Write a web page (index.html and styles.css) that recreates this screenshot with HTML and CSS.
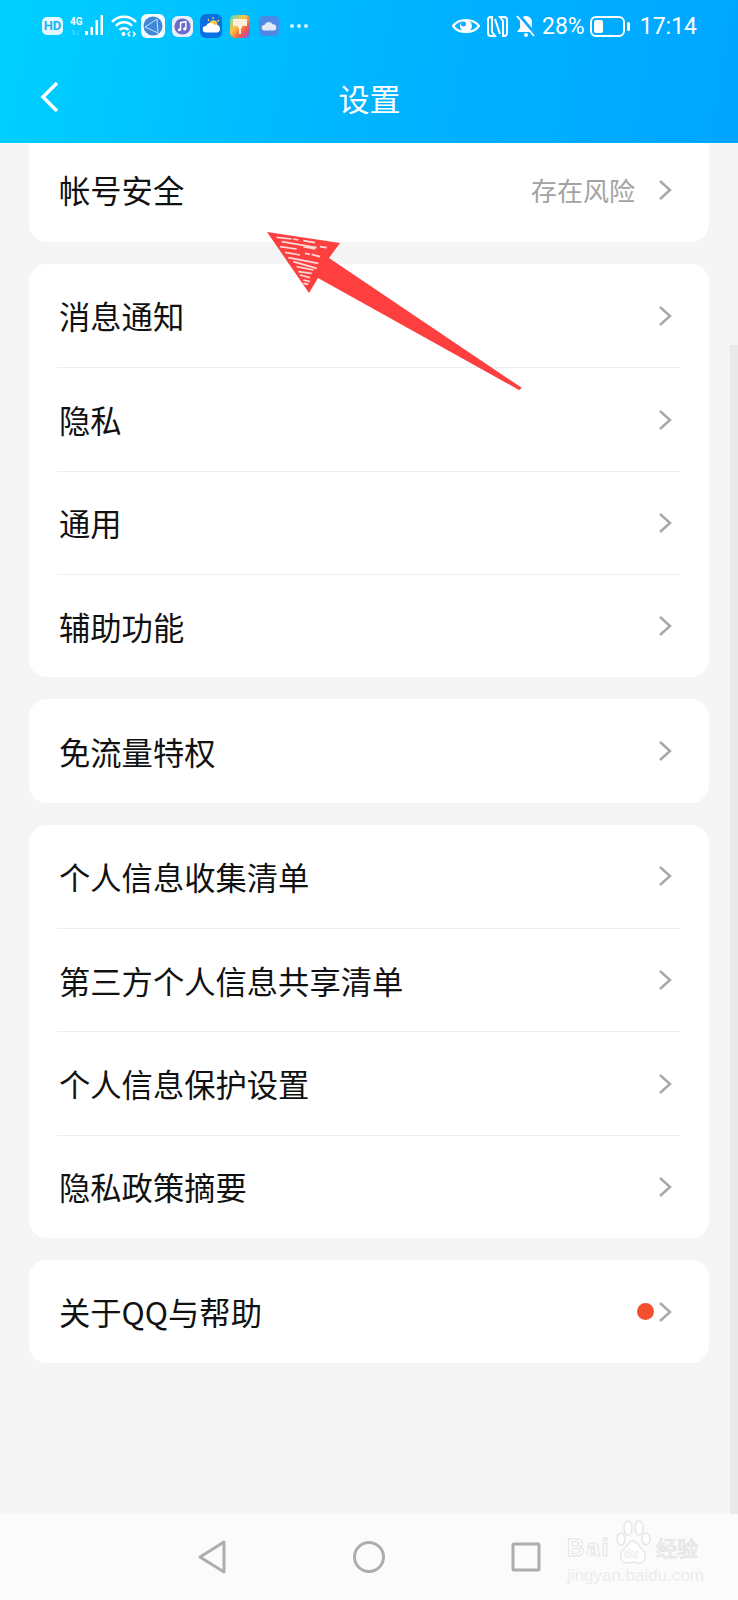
FILE: index.html
```html
<!DOCTYPE html>
<html>
<head>
    <title>设置</title>
    <link rel="stylesheet" href="styles.css">
</head>
<body>
    <div class="phone">
        <div class="header">
            <div class="status-bar">
                <div class="status-left">
                    <span class="hd">HD</span>
                    <svg class="signal" width="33" height="22" viewBox="0 0 33 22">
                        <text x="0" y="10" class="net-text">4G</text>
                        <text x="1" y="20" class="net-small">1↓</text>
                        <rect x="15" y="16" width="3" height="4" fill="#fff"/>
                        <rect x="20.500" y="12" width="2.500" height="8" fill="#fff"/>
                        <rect x="25.500" y="5" width="2.500" height="15" fill="#fff"/>
                        <rect x="30.500" y="0" width="2.500" height="20" fill="#fff"/>
                    </svg>
                    <svg class="wifi" width="26" height="22" viewBox="0 0 26 22" fill="none" stroke="#fff" stroke-width="2.500">
                        <path d="M1 7C7 0 19 0 25 7"/>
                        <path d="M5 11C9 6 17 6 21 11"/>
                        <path d="M8.500 15C10.500 12.500 15.500 12.500 17.500 15"/>
                        <circle cx="12.500" cy="19" r="2" fill="#fff" stroke="none"/>
                        <path d="M19 16.500l-2 2.500 2 2.500M22 16.500l2 2.500-2 2.500" stroke-width="1.500"/>
                    </svg>
                    <svg class="app-first" width="24" height="24" viewBox="0 0 24 24">
                        <rect width="24" height="24" rx="6" fill="#f5fbff"/>
                        <circle cx="12" cy="12" r="9.500" fill="#3f87d8"/>
                        <path d="M4 13L16 5l1 14z" fill="none" stroke="#cfe2f7" stroke-width="1"/>
                    </svg>
                    <svg width="21" height="21" viewBox="0 0 22 22">
                        <rect width="22" height="22" rx="6" fill="#e8eefb"/>
                        <circle cx="11" cy="11" r="8.500" fill="#6a6cc9"/>
                        <path d="M9 14.500V7l5.500-1v7.500" fill="none" stroke="#fff" stroke-width="1.500"/>
                        <circle cx="7.800" cy="14.500" r="1.600" fill="#fff"/>
                        <circle cx="13.300" cy="13.500" r="1.600" fill="#fff"/>
                    </svg>
                    <svg width="22" height="24" viewBox="0 0 22 24">
                        <rect width="22" height="24" rx="6" fill="#0a6fe0"/>
                        <path d="M13 3v2M19 6l-1.500 1.500M8 5l1 2" stroke="#ffd75e" stroke-width="1.200"/>
                        <circle cx="13.500" cy="10" r="3.800" fill="#ffc93c"/>
                        <path d="M6 18.500a3.300 3.300 0 0 1 0-6.600 4.800 4.800 0 0 1 8.500-.9 3.800 3.800 0 0 1 3 7.500z" fill="#fff"/>
                    </svg>
                    <svg class="app-brush" width="20" height="23" viewBox="0 0 20 23">
                        <defs>
                            <linearGradient id="paint" x1="0" y1="0" x2="1" y2="1">
                                <stop offset="0" stop-color="#4fd6c8"/>
                                <stop offset="0.4" stop-color="#ffc53d"/>
                                <stop offset="0.7" stop-color="#f4574f"/>
                                <stop offset="1" stop-color="#7a5cf0"/>
                            </linearGradient>
                        </defs>
                        <rect width="20" height="23" rx="5" fill="url(#paint)"/>
                        <path d="M3 4h14v7h-5v2h-1v6H9v-6H8v-2H3z" fill="#fbeedd"/>
                    </svg>
                    <svg class="app-cloud" width="20" height="20" viewBox="0 0 22 22">
                        <rect width="22" height="22" rx="5" fill="#4c8ae6"/>
                        <path d="M6 16a3 3 0 0 1 0-6 5 5 0 0 1 9-1 3.500 3.500 0 0 1 1 7z" fill="#dfe9f8"/>
                    </svg>
                    <span class="more">
                        <i class="more-dot"></i>
                        <i class="more-dot"></i>
                        <i class="more-dot"></i>
                    </span>
                </div>
                <div class="status-right">
                    <svg width="28" height="18" viewBox="0 0 28 18">
                        <path d="M1 9C7 1 21 1 27 9 21 17 7 17 1 9z" fill="none" stroke="#fff" stroke-width="2.200"/>
                        <circle cx="14" cy="9" r="6" fill="#fff"/>
                        <circle cx="11.500" cy="7" r="2.500" fill="#12a8ff"/>
                    </svg>
                    <svg width="21" height="21" viewBox="0 0 21 21" fill="none" stroke="#fff" stroke-width="2">
                        <path d="M5 1H4a3 3 0 0 0-3 3v13a3 3 0 0 0 3 3h4l-3-4V1z"/>
                        <path d="M16 20h1a3 3 0 0 0 3-3V4a3 3 0 0 0-3-3h-4l3 4v15z"/>
                        <path d="M8 3l5 15"/>
                    </svg>
                    <svg width="22" height="22" viewBox="0 0 22 22">
                        <path d="M11 1a6 6 0 0 0-6 6v6l-3 4h18l-3-4V7a6 6 0 0 0-6-6z" fill="#fff"/>
                        <circle cx="11" cy="20" r="2" fill="#fff"/>
                        <path d="M4 0l17 20" stroke="#12a8ff" stroke-width="3"/>
                        <path d="M2 1l17 20" stroke="#fff" stroke-width="1.800"/>
                    </svg>
                    <span class="battery-text">28%</span>
                    <svg width="41" height="21" viewBox="0 0 41 21">
                        <rect x="1" y="1" width="33" height="19" rx="5" fill="none" stroke="#fff" stroke-width="2"/>
                        <rect x="4" y="4" width="9" height="13" rx="2" fill="#fff"/>
                        <rect x="37" y="6" width="3" height="9" rx="1.500" fill="#fff"/>
                    </svg>
                    <span class="clock">17:14</span>
                </div>
            </div>
            <div class="title-bar">
                <svg class="back" width="20" height="32" viewBox="0 0 20 32" fill="none" stroke="#fff" stroke-width="3.500">
                    <path d="M17 2L3 16l14 14"/>
                </svg>
                <h1 class="title">设置</h1>
            </div>
        </div>

        <div class="content">
            <div class="card card-top">
                <div class="row">
                    <span class="label">帐号安全</span>
                    <span class="hint">存在风险</span>
                    <svg class="chevron" width="14" height="22" viewBox="0 0 14 22"><path d="M2 2l10 9-10 9"/></svg>
                </div>
            </div>

            <div class="card">
                <div class="row">
                    <span class="label">消息通知</span>
                    <svg class="chevron" width="14" height="22" viewBox="0 0 14 22"><path d="M2 2l10 9-10 9"/></svg>
                </div>
                <div class="row">
                    <span class="label">隐私</span>
                    <svg class="chevron" width="14" height="22" viewBox="0 0 14 22"><path d="M2 2l10 9-10 9"/></svg>
                </div>
                <div class="row">
                    <span class="label">通用</span>
                    <svg class="chevron" width="14" height="22" viewBox="0 0 14 22"><path d="M2 2l10 9-10 9"/></svg>
                </div>
                <div class="row">
                    <span class="label">辅助功能</span>
                    <svg class="chevron" width="14" height="22" viewBox="0 0 14 22"><path d="M2 2l10 9-10 9"/></svg>
                </div>
            </div>

            <div class="card">
                <div class="row">
                    <span class="label">免流量特权</span>
                    <svg class="chevron" width="14" height="22" viewBox="0 0 14 22"><path d="M2 2l10 9-10 9"/></svg>
                </div>
            </div>

            <div class="card">
                <div class="row">
                    <span class="label">个人信息收集清单</span>
                    <svg class="chevron" width="14" height="22" viewBox="0 0 14 22"><path d="M2 2l10 9-10 9"/></svg>
                </div>
                <div class="row">
                    <span class="label">第三方个人信息共享清单</span>
                    <svg class="chevron" width="14" height="22" viewBox="0 0 14 22"><path d="M2 2l10 9-10 9"/></svg>
                </div>
                <div class="row">
                    <span class="label">个人信息保护设置</span>
                    <svg class="chevron" width="14" height="22" viewBox="0 0 14 22"><path d="M2 2l10 9-10 9"/></svg>
                </div>
                <div class="row">
                    <span class="label">隐私政策摘要</span>
                    <svg class="chevron" width="14" height="22" viewBox="0 0 14 22"><path d="M2 2l10 9-10 9"/></svg>
                </div>
            </div>

            <div class="card">
                <div class="row">
                    <span class="label">关于QQ与帮助</span>
                    <i class="red-dot"></i>
                    <svg class="chevron" width="14" height="22" viewBox="0 0 14 22"><path d="M2 2l10 9-10 9"/></svg>
                </div>
            </div>

            <div class="scrollbar"></div>
        </div>

        <div class="nav-bar">
            <svg width="30" height="34" viewBox="0 0 30 34" fill="none" stroke="#adadad" stroke-width="3" stroke-linejoin="round">
                <path d="M27 2L3 17l24 15z"/>
            </svg>
            <svg width="32" height="32" viewBox="0 0 32 32" fill="none" stroke="#adadad" stroke-width="3">
                <circle cx="16" cy="16" r="14.500"/>
            </svg>
            <svg width="30" height="30" viewBox="0 0 30 30" fill="none" stroke="#adadad" stroke-width="3" stroke-linejoin="round">
                <rect x="2" y="2" width="26" height="26" rx="1"/>
            </svg>
        </div>

        <svg class="arrow" width="738" height="1600" viewBox="0 0 738 1600">
            <path d="M267 232L340 243 329 258 522 388 519 390 318 278 309 293z" fill="#fd3f3f"/>
            <g transform="translate(255 225) scale(.3333)" stroke="#fbdada" stroke-width="5">
                <path d="M65 37l45 5M115 42l15 3M145 47l35 6M80 50l105 18M75 65l50 7M145 65l35 7M195 65l20 3"/>
                <path d="M90 82l45 8M150 85l15 3M170 88l25 7M100 98l90 17M115 110l70 20M125 125l50 10"/>
                <path d="M130 140l40 5M135 150l30 8M145 165l20 5M145 175l15 3"/>
            </g>
        </svg>

        <div class="watermark">
            <div class="wm-brand">
                <span class="wm-bai">Bai</span>
                <svg class="paw" width="36" height="46" viewBox="0 0 36 46" fill="#fff" stroke="#e6e6e6" stroke-width="1.500">
                    <ellipse cx="6" cy="19" rx="4" ry="6"/>
                    <ellipse cx="13" cy="8" rx="4" ry="7"/>
                    <ellipse cx="24" cy="8" rx="4" ry="7"/>
                    <ellipse cx="31" cy="19" rx="4" ry="6"/>
                    <path d="M18 21c-5 0-5 5-9 8-5 4-4 14 3 14 3 0 4-1 6-1s3 1 6 1c7 0 8-10 3-14-4-3-4-8-9-8z"/>
                    <text x="8.500" y="38" class="wm-du">du</text>
                </svg>
                <span class="wm-cn">经验</span>
            </div>
            <div class="wm-url">jingyan.baidu.com</div>
        </div>
    </div>
</body>
</html>
```

FILE: styles.css
```css
* {
    box-sizing: border-box;
}
body {
    margin: 0;
    background-color: #f5f5f5;
    font-family: "Noto Sans CJK SC", "Noto Sans", sans-serif;
}
.phone {
    position: relative;
    width: 738px;
    height: 1600px;
    display: flex;
    flex-direction: column;
    overflow: hidden;
}
.header {
    height: 143px;
    background: linear-gradient(100deg, #00d0ff 0%, #00b4ff 50%, #00a6ff 100%);
    color: white;
    padding: 13px 41px 0 42px;
}
.status-bar {
    height: 26px;
    display: flex;
    justify-content: space-between;
    align-items: center;
}
.status-left, .status-right {
    display: flex;
    align-items: center;
}
.status-left {
    gap: 7px;
}
.status-right {
    gap: 7px;
}
.hd {
    width: 21px;
    height: 18px;
    background: #e6f8ff;
    color: #18b4f5;
    border-radius: 5px;
    font: bold 13px/18px "Roboto", sans-serif;
    text-align: center;
}
.net-text {
    font: bold 10px "Roboto", sans-serif;
    fill: #fff;
}
.net-small {
    font: 8px "Roboto", sans-serif;
    fill: #8fe3ff;
}
.wifi {
    margin-left: 1px;
}
.app-first {
    margin-left: -3px;
}
.app-brush {
    margin-left: 1px;
}
.app-cloud {
    margin-left: 2px;
}
.more {
    display: flex;
    gap: 3px;
    margin-left: 4px;
}
.more-dot {
    width: 4px;
    height: 4px;
    border-radius: 50%;
    background: #d5f3ff;
}
.battery-text {
    font: 23px "Roboto", sans-serif;
    margin-left: -2px;
    margin-right: -2px;
}
.clock {
    font: 23px "Roboto", sans-serif;
    margin-left: 2px;
}
.title-bar {
    position: relative;
    height: 104px;
    display: flex;
    align-items: center;
    justify-content: center;
}
.title {
    margin: 13px 0 0;
    font-size: 31px;
    font-weight: 400;
}
.back {
    position: absolute;
    left: -2px;
    top: 42px;
}
.content {
    position: relative;
    flex: 1;
    padding: 0 29px;
}
.card {
    background: white;
    border-radius: 18px;
    margin-bottom: 22px;
    padding: 0 29px 0 28px;
}
.card-top {
    border-radius: 0 0 18px 18px;
    height: 99px;
}
.row {
    height: 103.350px;
    display: flex;
    align-items: center;
    border-top: 1px solid #eeeeee;
}
.row:first-child {
    border-top: none;
}
.card-top .row {
    height: 94px;
}
.label {
    flex: 1;
    font-size: 31.300px;
    color: #111;
    margin-left: 2px;
}
.card-top .label {
    margin-bottom: 2px;
}
.hint {
    font-size: 26px;
    color: #a3a3a3;
    margin: 0 23px 2px 0;
}
.chevron {
    fill: none;
    stroke: #a8a8a8;
    stroke-width: 2.500;
    margin-right: 8px;
}
.red-dot {
    width: 17px;
    height: 17px;
    border-radius: 50%;
    background: #f4502f;
    margin-right: 4px;
}
.scrollbar {
    position: absolute;
    right: 0;
    top: 202px;
    bottom: 0;
    width: 8px;
    background: #e9e9e9;
}
.nav-bar {
    height: 86px;
    background: #fbfbfb;
    display: flex;
    align-items: center;
    justify-content: center;
    gap: 126px;
}
.arrow {
    position: absolute;
    left: 0;
    top: 0;
}
.watermark {
    position: absolute;
    left: 567px;
    top: 1520px;
    width: 135px;
}
.wm-brand {
    display: flex;
    align-items: flex-end;
    height: 46px;
}
.wm-bai {
    width: 48px;
    margin-bottom: 6px;
    font: bold 24px/24px "Liberation Sans", sans-serif;
    letter-spacing: 2px;
    color: #fff;
    -webkit-text-stroke: 1px #e4e4e4;
}
.paw {
    flex: none;
}
.wm-du {
    font: bold 12px "Liberation Sans", sans-serif;
    stroke-width: 0.500;
    fill: #fff;
}
.wm-cn {
    margin: 0 0 7px 5px;
    font-size: 21px;
    line-height: 24px;
    white-space: nowrap;
    color: #fff;
    -webkit-text-stroke: 1px #e4e4e4;
}
.wm-url {
    font: 17px/20px "Liberation Sans", sans-serif;
    white-space: nowrap;
    color: #ececec;
}
```
